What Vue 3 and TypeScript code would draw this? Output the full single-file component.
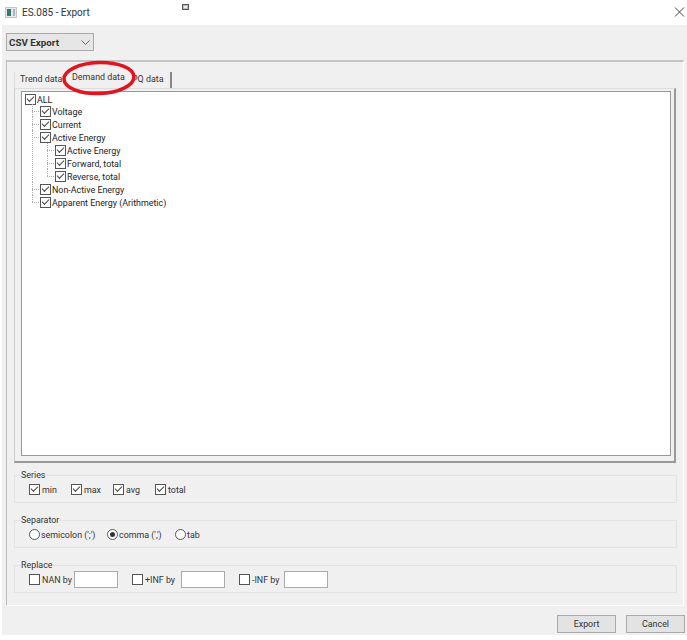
<script setup lang="ts">
const tabs = ['Trend data', 'Demand data', 'PQ data']
const children = ['Active Energy', 'Forward, total', 'Reverse, total']
const series = ['min', 'max', 'avg', 'total']
const seps = [
  { label: "semicolon (';')", on: false },
  { label: "comma (',')", on: true },
  { label: 'tab', on: false },
]
const replaces = ['NAN by', '+INF by', '-INF by']
</script>

<template>
  <div class="win">
    <header class="title">
      <svg class="appicon" width="13" height="11" viewBox="0 0 13 11">
        <rect x="0.5" y="0.5" width="11" height="10" fill="#e8e8e8" stroke="#c4c4c4" />
        <rect x="2" y="2" width="4" height="7" fill="#2f7a78" />
        <rect x="8" y="2" width="2" height="7" fill="#a8b4c4" />
      </svg>
      <span class="title-text">ES.085 - Export</span>
      <svg class="restore" width="7" height="6" viewBox="0 0 7 6">
        <rect x="0.5" y="0.5" width="6" height="5" fill="#bbb" stroke="#555" />
        <rect x="2" y="2" width="3" height="2" fill="#eee" />
      </svg>
      <svg class="close" width="11" height="10" viewBox="0 0 11 10">
        <path d="M1 0.5 L10 9.5 M10 0.5 L1 9.5" stroke="#444" stroke-width="1" fill="none" />
      </svg>
    </header>

    <main class="body">
      <div class="combo">
        <span>CSV Export</span>
        <svg width="9" height="5" viewBox="0 0 9 5">
          <path d="M0.5 0.5 L4.5 4.5 L8.5 0.5" stroke="#666" fill="none" />
        </svg>
      </div>

      <section class="frame">
        <div class="tabs">
          <span v-for="t in tabs" :key="t" class="tab" :class="{ active: t === 'Demand data' }">{{ t }}</span>
        </div>
        <div class="pane">
          <div class="tree">
            <div class="row"><i class="cb on"></i>ALL</div>
            <ul class="lvl root">
              <li><div class="row"><i class="cb on"></i>Voltage</div></li>
              <li><div class="row"><i class="cb on"></i>Current</div></li>
              <li>
                <div class="row"><i class="cb on"></i>Active Energy</div>
                <ul class="lvl">
                  <li v-for="c in children" :key="c"><div class="row"><i class="cb on"></i>{{ c }}</div></li>
                </ul>
              </li>
              <li><div class="row"><i class="cb on"></i>Non-Active Energy</div></li>
              <li><div class="row"><i class="cb on"></i>Apparent Energy (Arithmetic)</div></li>
            </ul>
          </div>
        </div>

        <fieldset class="group">
          <legend>Series</legend>
          <div class="opts series">
            <label v-for="s in series" :key="s"><i class="cb on"></i>{{ s }}</label>
          </div>
        </fieldset>
        <fieldset class="group">
          <legend>Separator</legend>
          <div class="opts seps">
            <label v-for="s in seps" :key="s.label"><i class="radio" :class="{ on: s.on }"></i>{{ s.label }}</label>
          </div>
        </fieldset>
        <fieldset class="group">
          <legend>Replace</legend>
          <div class="opts reps">
            <label v-for="r in replaces" :key="r"><i class="cb"></i>{{ r }}<span class="input"></span></label>
          </div>
        </fieldset>
      </section>

      <footer class="actions">
        <button class="btn">Export</button>
        <button class="btn">Cancel</button>
      </footer>
    </main>

    <svg class="mark" width="80" height="42" viewBox="0 0 80 42">
      <ellipse cx="39" cy="20" rx="35" ry="15.5" transform="rotate(-2 39 20)" fill="none" stroke="#e2141f" stroke-width="3.5" />
    </svg>
  </div>
</template>

<style>
html, body { margin: 0; background: #fff; }
</style>

<style scoped>
.win {
  position: relative;
  width: 687px;
  height: 640px;
  font-family: Roboto, "Noto Sans", sans-serif;
  font-size: 8.9px;
  color: #222;
  background: #fff;
  overflow: hidden;
}
.title {
  height: 25px;
  display: flex;
  align-items: center;
  padding-left: 5px;
  padding-right: 2px;
}
.appicon { margin-right: 4px; }
.title-text { font-size: 10px; color: #333; width: 63px; white-space: nowrap; }
.restore { margin-left: 97px; margin-bottom: 12px; }
.close { margin-left: auto; margin-bottom: 1px; }
.body {
  margin-left: 2px;
  height: 610px;
  background: #f0f0f0;
  box-sizing: border-box;
  padding-top: 8px;
}
.combo {
  margin-left: 4px;
  width: 88px;
  height: 18px;
  box-sizing: border-box;
  border: 1px solid #aaa;
  background: #e6e6e6;
  display: flex;
  align-items: center;
  justify-content: space-between;
  padding: 0 3px 0 2px;
  font-weight: 700;
  font-size: 9.8px;
  color: #333;
}
.frame {
  margin: 9px 0 0 4px;
  width: 678px;
  height: 546px;
  box-sizing: border-box;
  border-top: 2px solid #c4c4c4;
  border-left: 1px solid #bbb;
  border-bottom: 1px solid #fff;
  border-right: 1px solid #fff;
  padding: 8px 7px 0 7px;
}
.tabs {
  display: flex;
  height: 18px;
  align-items: flex-end;
}
.tab {
  box-sizing: border-box;
  height: 16px;
  line-height: 15px;
  color: #333;
}
.tab:nth-child(1) { width: 52px; padding-left: 5px; border-left: 1px solid #ddd; }
.tab:nth-child(2) { width: 66px; padding-left: 6px; height: 18px; line-height: 14px; }
.tab:nth-child(3) { width: 40px; padding-left: 0; border-right: 2px solid #888; }
.pane {
  box-sizing: border-box;
  width: 662px;
  height: 375px;
  border: 1px solid #fff;
  border-right: 2px solid #999;
  border-bottom: 2px solid #999;
  border-left: 1px solid #ccc;
  border-top: 1px solid #ddd;
  padding: 2px 4px 4px 6px;
}
.tree {
  box-sizing: border-box;
  width: 650px;
  height: 365px;
  background: #fff;
  border: 1px solid #999;
  padding: 1px 0 0 3px;
}
.row {
  display: flex;
  align-items: center;
  height: 13px;
  white-space: nowrap;
}
.cb {
  box-sizing: border-box;
  flex: none;
  position: relative;
  display: inline-block;
  width: 11px;
  height: 11px;
  border: 1px solid #555;
  background: #fff;
  margin-right: 1px;
}
.cb.on::after {
  content: "";
  position: absolute;
  left: 1px;
  top: 1px;
  width: 6px;
  height: 3px;
  border-left: 1px solid #444;
  border-bottom: 1px solid #444;
  transform: rotate(-45deg);
}
.lvl {
  list-style: none;
  margin: 0;
  padding: 0 0 0 15px;
  position: relative;
}
.lvl.root { margin-top: -1px; }
.lvl li { position: relative; }
.lvl li::before {
  content: "";
  position: absolute;
  left: -8px;
  top: 6px;
  width: 7px;
  border-top: 1px dotted #aaa;
}
.lvl li::after {
  content: "";
  position: absolute;
  left: -8px;
  top: -1px;
  height: 7px;
  border-left: 1px dotted #aaa;
}
.lvl li:not(:last-child)::after { height: 100%; }
.group {
  margin: 13px 0 0 0;
  box-sizing: border-box;
  width: 663px;
  border: 1px solid #e2e2e2;
  padding: 0;
  height: 32px;
}
.group:first-of-type { margin-top: 8px; }
.group legend {
  padding: 0;
  margin-left: 6px;
  line-height: 8px;
  height: 8px;
  color: #333;
}
.opts {
  display: flex;
  align-items: center;
  padding-left: 14px;
  margin-top: 2px;
  height: 17px;
}
.opts label { display: flex; align-items: center; color: #333; flex: none; }
.series label { width: 42px; }
.series .cb { margin-right: 2px; }
.seps label:nth-child(1) { width: 78px; }
.seps label:nth-child(2) { width: 68px; }
.radio {
  box-sizing: border-box;
  position: relative;
  display: inline-block;
  width: 11px;
  height: 11px;
  border: 1px solid #555;
  border-radius: 50%;
  background: #fff;
  margin-right: 1px;
}
.radio.on::after {
  content: "";
  position: absolute;
  left: 2px;
  top: 2px;
  width: 5px;
  height: 5px;
  border-radius: 50%;
  background: #333;
}
.reps { gap: 14px; }
.reps label:nth-child(1) { width: 89px; }
.reps label:nth-child(2) { width: 93px; }
.reps label:nth-child(3) { width: 89px; }
.reps .cb { margin-right: 2px; }
.input {
  display: inline-block;
  box-sizing: border-box;
  margin-left: auto;
  width: 44px;
  height: 17px;
  background: #fff;
  border: 1px solid #aaa;
}
.actions {
  display: flex;
  justify-content: flex-end;
  gap: 10px;
  padding: 9px 0 0 0;
  margin-right: 2px;
}
.btn {
  box-sizing: border-box;
  width: 59px;
  height: 18px;
  padding: 0;
  border: 1px solid #aaa;
  background: #e3e3e3;
  font: inherit;
  color: #333;
}
.mark {
  position: absolute;
  left: 60px;
  top: 58px;
  pointer-events: none;
}
</style>
